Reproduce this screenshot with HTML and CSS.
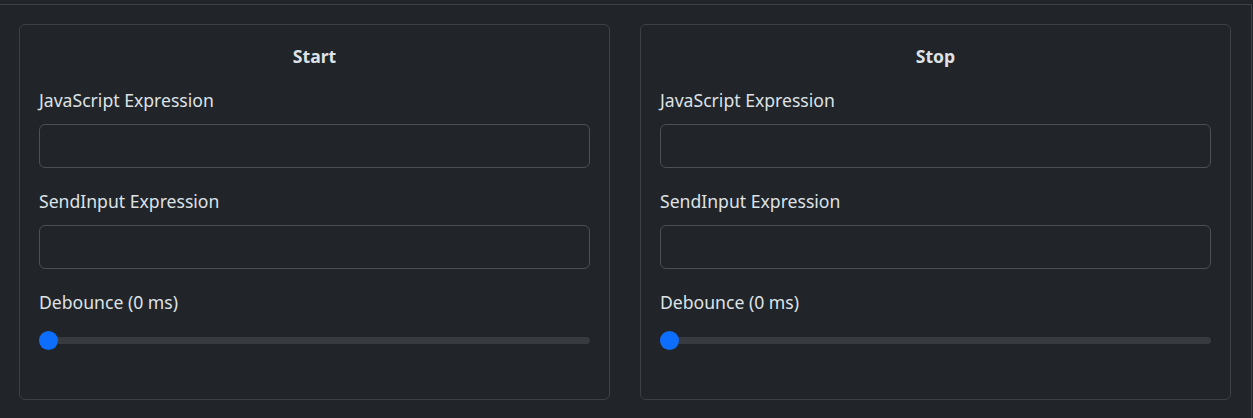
FILE: index.html
```html
<!DOCTYPE html>
<html lang="en">
<head>
<meta charset="utf-8">
<title>Start / Stop</title>
<link rel="stylesheet" href="styles.css">
</head>
<body>
<div class="panel">
  <div class="grid">
    <section class="card">
      <h2 class="card-title">Start</h2>
      <div class="field">
        <label class="label">JavaScript Expression</label>
        <input class="control" type="text">
      </div>
      <div class="field">
        <label class="label">SendInput Expression</label>
        <input class="control" type="text">
      </div>
      <div class="field field-last">
        <label class="label">Debounce (0 ms)</label>
        <input class="range" type="range" min="0" max="1000" value="0">
      </div>
    </section>
    <section class="card">
      <h2 class="card-title">Stop</h2>
      <div class="field">
        <label class="label">JavaScript Expression</label>
        <input class="control" type="text">
      </div>
      <div class="field">
        <label class="label">SendInput Expression</label>
        <input class="control" type="text">
      </div>
      <div class="field field-last">
        <label class="label">Debounce (0 ms)</label>
        <input class="range" type="range" min="0" max="1000" value="0">
      </div>
    </section>
  </div>
</div>
</body>
</html>
```
FILE: styles.css
```css
* { box-sizing: border-box; }
html, body {
  margin: 0;
  background: #212529;
  color: #dee2e6;
  font-family: "Noto Sans", "Open Sans", sans-serif;
  font-size: 17.6px;
}
body { padding-top: 4px; }
.panel {
  width: 1252px;
  border-top: 1px solid #3d4146;
  border-right: 1px solid #3d4146;
  padding: 19px 20px 19px 19px;
}
.grid {
  display: grid;
  grid-template-columns: 1fr 1fr;
  gap: 30px;
}
.card {
  border: 1px solid #3d4146;
  border-radius: 6px;
  padding: 18px 19px 30px 19px;
}
.card-title {
  margin: 0 0 17px;
  font-size: 17.6px;
  font-weight: 700;
  line-height: 27px;
  text-align: center;
}
.field { display: flex; flex-direction: column; margin-bottom: 20px; }
.field-last { margin-top: 2px; margin-bottom: 19px; }
.label { line-height: 27px; margin-bottom: 10px; }
.control {
  height: 44px;
  background: #212529;
  border: 1px solid #4b5056;
  border-radius: 6px;
  color: #dee2e6;
  font: inherit;
  padding: 6px 12px;
}
.range {
  -webkit-appearance: none;
  appearance: none;
  margin: 5px 0 0;
  height: 19px;
  background: transparent;
  width: 100%;
}
.range::-webkit-slider-runnable-track {
  height: 7px;
  border-radius: 4px;
  background: #373b40;
}
.range::-webkit-slider-thumb {
  -webkit-appearance: none;
  appearance: none;
  width: 19px;
  height: 19px;
  border-radius: 50%;
  background: #0d6efd;
  border: 0;
  margin-top: -6px;
}
```
